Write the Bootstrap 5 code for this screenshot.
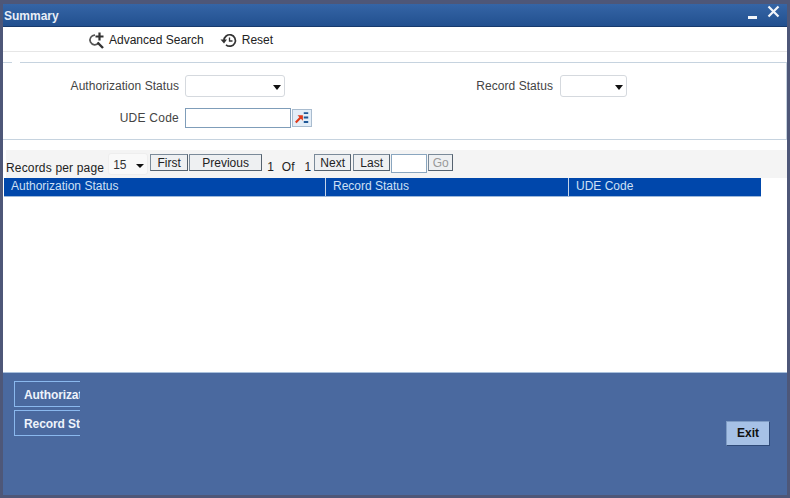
<!DOCTYPE html>
<html lang="en">
<head>
<meta charset="utf-8">
<title>Summary</title>
<link href="https://cdn.jsdelivr.net/npm/bootstrap@5.3.0/dist/css/bootstrap.min.css" rel="stylesheet">
<style>
html,body{height:100%}
body{background:#4e5778;font-family:"Liberation Sans",Arial,sans-serif;font-size:12px;color:#333;overflow:hidden}
.shell{width:790px;height:498px;padding:4px 3px 3px}
.win{height:491px;background:#fff}
.titlebar{height:23px;background:linear-gradient(#3565a6,#22508f);border-bottom:1px solid #173a6d;color:#e8eef7;font-weight:700;padding:1px 0 0 1px;line-height:22px}
.winbtns{gap:9px;padding-right:7px;margin-top:-1px}
.toolbar{height:25px;border-bottom:1px solid #e6e6e6;padding:2px 0 0 85px;gap:16px;color:#222}
.tool-a{gap:4px}
.tool-b{gap:5px}
.filters{margin-top:10px;height:78px;border:1px solid #c6d3df;border-left:0;position:relative;padding-top:12px}
.legendgap{position:absolute;left:9px;top:-1px;width:8px;height:1px;background:#fff}
.frow{height:22px}
.frow2{height:20px;margin-top:11px}
.lbl{text-align:right;color:#444;letter-spacing:.05px}
.lbl-a{width:176px}
.lbl-b{width:268px}
.lbl-u{letter-spacing:.25px}
.fake-sel{height:22px;border:1px solid #d5d9de;border-radius:3px;background:#fff;position:relative;margin-left:6px}
.fake-sel::after{content:"";position:absolute;right:3px;top:9px;border:4px solid transparent;border-top:5px solid #111;border-bottom:0}
.w100{width:100px}
.w67{width:67px;margin-left:7px}
.inp{width:106px;height:20px;border:1px solid #7f9db9;margin-left:6px;background:#fff}
.lov{width:20px;height:18px;background:#e3edf7;border:1px solid #a9bccf;margin-left:1px;display:block}
.pager{margin:10px 0 0 3px;height:28px;background:#f4f4f4;color:#222;padding-top:4px}
.pg-btn{height:17px;border:1px solid #7a8a99;border-right-color:#55626f;border-bottom-color:#55626f;background:#eef0f2;color:#222;font-size:12px;line-height:14px;padding:1px 0 0;text-align:center;border-radius:0}
.b-first{width:38px}
.b-prev{width:73px;margin-left:1px}
.b-next{width:37px;margin-left:3px}
.b-last{width:37px;margin-left:2px}
.b-go{width:25px;color:#999}
.rpp{margin-top:5px;letter-spacing:.17px}
.pg-sel{width:40px;height:22px;border:1px solid #eee;border-radius:3px;background:#f9f9f9;margin:-1px 2px 0 4px;position:relative;padding-left:4px;line-height:22px;color:#333}
.pg-sel::after{content:"";position:absolute;right:3px;top:10px;border:4px solid transparent;border-top:4px solid #111;border-bottom:0}
.num{margin-top:4px}
.n1{margin-left:5px}
.n2{margin-left:8px}
.n3{margin-left:10px}
.pg-inp{width:36px;height:19px;background:#fff;border:1px solid #8aa6bf;margin:0 1px}
.gridhead{width:757px;height:19px;background:#0047ab;color:#cfe0f5;margin-left:1px;border-bottom:1px solid #9db8da;line-height:15px}
.gridhead>div{padding:1px 0 0 7px;border-right:1px solid #c5d4e8;height:18px}
.ch1{width:322px}
.ch2{width:243px}
.gridhead>.ch3{border-right:0;flex-grow:1}
.gridbody{height:175px}
.foot{height:123px;background:#4a699f;border-top:1px solid #a9c0dc}
.stub{width:66px;height:26px;border:1px solid #8ab8ee;border-right:0;color:#eef3fb;font-weight:700;padding:1px 0 0 9px;line-height:24px;overflow:hidden;white-space:nowrap;letter-spacing:-.1px}
.stubs{padding:8px 0 0 11px;gap:3px}
.exit{width:44px;height:25px;background:#a6c1e6;border:1px solid #7f9cc4;border-bottom-color:#2f4a78;border-right-color:#2f4a78;color:#111;font-weight:700;border-radius:0;padding:0;font-size:12px;line-height:23px}
.exitwrap{padding:48px 17px 0 0}
</style>
</head>
<body>
<div class="shell">
<div class="win d-flex flex-column">
  <div class="titlebar d-flex justify-content-between">
    <span>Summary</span>
    <span class="winbtns d-flex align-items-start">
      <svg width="10" height="22" viewBox="0 0 10 22"><rect x="0" y="12" width="9" height="3" fill="#f2f5fa"/></svg>
      <svg width="13" height="22" viewBox="0 0 13 22"><path d="M1.5 2.5 11.5 12.5M11.5 2.5 1.5 12.5" stroke="#f2f5fa" stroke-width="2.2" fill="none"/></svg>
    </span>
  </div>
  <div class="toolbar d-flex align-items-center">
    <span class="tool-a d-flex align-items-center">
      <svg width="17" height="17" viewBox="0 0 17 17"><path d="M7 3.2A4.8 4.8 0 1 0 10.8 10.6" stroke="#555" stroke-width="1.7" fill="none"/><path d="M9.5 10.5 15 16" stroke="#333" stroke-width="2.4"/><path d="M11.5 0.5v8M7.5 4.5h8" stroke="#333" stroke-width="2.2"/></svg>
      Advanced Search
    </span>
    <span class="tool-b d-flex align-items-center">
      <svg width="17" height="15" viewBox="0 0 17 15"><path d="M4 7.5A5.7 5.7 0 1 1 6 11.8" stroke="#333" stroke-width="1.7" fill="none"/><path d="M0.5 6.5H7L4 10.5Z" fill="#333"/><path d="M9.5 4.5V8H12.5" stroke="#333" stroke-width="1.3" fill="none"/></svg>
      Reset
    </span>
  </div>
  <div class="filters">
    <span class="legendgap"></span>
    <div class="frow d-flex align-items-center">
      <div class="lbl lbl-a">Authorization Status</div>
      <div class="fake-sel w100"></div>
      <div class="lbl lbl-b">Record Status</div>
      <div class="fake-sel w67"></div>
    </div>
    <div class="frow2 d-flex align-items-center">
      <div class="lbl lbl-a lbl-u">UDE Code</div>
      <div class="inp"></div>
      <svg class="lov" viewBox="0 0 20 18"><path d="M3 14 9 8" stroke="#e0391a" stroke-width="2.4"/><path d="M5 6H11V12Z" fill="#e0391a"/><path d="M12 3.5h5M12 8.5h5M12 13.5h5" stroke="#1f5796" stroke-width="2.2"/></svg>
    </div>
  </div>
  <div class="pager d-flex align-items-start">
    <span class="rpp">Records per page</span>
    <span class="pg-sel">15</span>
    <button class="pg-btn btn b-first">First</button>
    <button class="pg-btn btn b-prev">Previous</button>
    <span class="num n1">1</span><span class="num n2">Of</span><span class="num n3">1</span>
    <button class="pg-btn btn b-next">Next</button>
    <button class="pg-btn btn b-last">Last</button>
    <span class="pg-inp"></span>
    <button class="pg-btn btn b-go">Go</button>
  </div>
  <div class="gridhead d-flex">
    <div class="ch1">Authorization Status</div>
    <div class="ch2">Record Status</div>
    <div class="ch3">UDE Code</div>
  </div>
  <div class="gridbody"></div>
  <div class="foot d-flex justify-content-between">
    <div class="stubs d-flex flex-column">
      <div class="stub">Authorization Status</div>
      <div class="stub">Record Status</div>
    </div>
    <div class="exitwrap"><button class="exit btn">Exit</button></div>
  </div>
</div>
</div>
<script src="https://cdn.jsdelivr.net/npm/bootstrap@5.3.0/dist/js/bootstrap.bundle.min.js"></script>
</body>
</html>
